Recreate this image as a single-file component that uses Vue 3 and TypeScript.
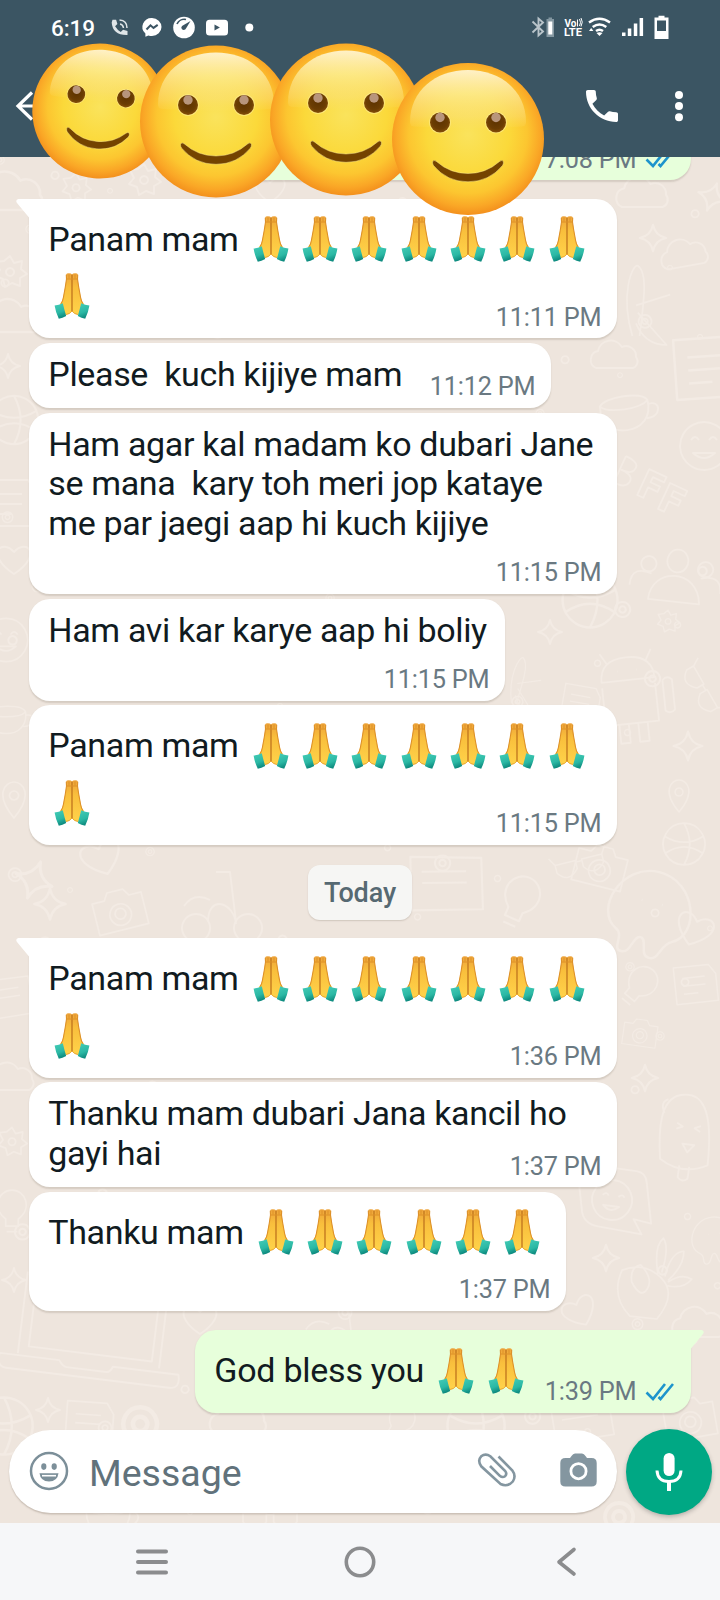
<script setup lang="ts">
interface Line {
  text: string
  hands?: number
}
interface Message {
  kind: 'msg'
  width: number
  lines: Line[]
  time: string
  sent?: boolean
  tail?: boolean
  timeBelow?: boolean
}
interface DateChip {
  kind: 'date'
  label: string
}
interface Face {
  id: number
  x: number
  y: number
  r: number
  tilt: number
}
interface Doodle {
  shape: string
  x: number
  y: number
  s: number
  rot: number
}

const items: (Message | DateChip)[] = [
  { kind: 'msg', width: 490, lines: [{ text: '' }], time: '7:08 PM', sent: true },
  { kind: 'msg', width: 588, lines: [{ text: 'Panam mam ', hands: 7 }, { text: '', hands: 1 }], time: '11:11 PM', tail: true },
  { kind: 'msg', width: 522, lines: [{ text: 'Please  kuch kijiye mam' }], time: '11:12 PM' },
  {
    kind: 'msg',
    width: 588,
    lines: [
      { text: 'Ham agar kal madam ko dubari Jane' },
      { text: 'se mana  kary toh meri jop kataye' },
      { text: 'me par jaegi aap hi kuch kijiye' },
    ],
    time: '11:15 PM',
    timeBelow: true,
  },
  { kind: 'msg', width: 476, lines: [{ text: 'Ham avi kar karye aap hi boliy' }], time: '11:15 PM', timeBelow: true },
  { kind: 'msg', width: 588, lines: [{ text: 'Panam mam ', hands: 7 }, { text: '', hands: 1 }], time: '11:15 PM' },
  { kind: 'date', label: 'Today' },
  { kind: 'msg', width: 588, lines: [{ text: 'Panam mam ', hands: 7 }, { text: '', hands: 1 }], time: '1:36 PM', tail: true },
  { kind: 'msg', width: 588, lines: [{ text: 'Thanku mam dubari Jana kancil ho' }, { text: 'gayi hai' }], time: '1:37 PM' },
  { kind: 'msg', width: 537, lines: [{ text: 'Thanku mam ', hands: 6 }], time: '1:37 PM', timeBelow: true },
  { kind: 'msg', width: 496, lines: [{ text: 'God bless you ', hands: 2 }], time: '1:39 PM', sent: true, tail: true },
]

const faces: Face[] = [
  { id: 1, x: 99.8, y: 111, r: 67.5, tilt: 5 },
  { id: 2, x: 216, y: 121.5, r: 76, tilt: 0 },
  { id: 3, x: 346, y: 119.5, r: 76, tilt: 0 },
  { id: 4, x: 468, y: 139, r: 76, tilt: 0 },
]

const shapes: Record<string, string> = {
  cloud: 'M-20 10a9 9 0 0 1 2-17a13 13 0 0 1 24-4a10 10 0 0 1 14 10a7 7 0 0 1-3 11z',
  star: 'M0-12Q2-2 12 0Q2 2 0 12Q-2 2-12 0Q-2-2 0-12z',
  flower: 'M0-14l4 7 8-2-1 8 6 5-7 4v8l-8-3-7 4-2-8-8-3 5-6-4-8 8-1zM0-2a4 4 0 1 0 .1 0z',
  cup: 'M-26-10c6-9 44-10 48 0c2 18-10 27-24 27s-26-8-24-27zM-26-10c8 8 40 8 48 0M22-6c14-3 12 15-3 14',
  smile: 'M0-24a24 24 0 1 0 .1 0zM-13-6q4-6 8 0M5-6q4-6 8 0M-11 7q11 10 22 0z',
  people: 'M0-30a11 12 0 1 0 .1 0zM-27 25c0-34 50-38 54 0zM-30-20a8 8 0 1 0 .1 0zM30-20a8 8 0 1 0 .1 0zM-48 12c0-16 10-18 22-14M48 12c0-16-10-18-22-14',
  droid: 'M-28 0q0-24 28-24t28 24zM-20-18l-7-12M20-18l7-12M-10-10h.5M10-10h.5M-28 6v40h56v-40M36 4v32q5 5 10 0v-32q-5-5-10 0M-14 46v20h10v-20M6 46v20h10v-20',
  camera: 'M-28-16h14l5-8h18l5 8h14v36h-56zM0-9a12 12 0 1 0 .1 0zM0-4a6 6 0 1 0 .1 0z',
  plane: 'M-4 40C-18-6-4-40 2-38C14-30 8 6 4 40M0 6l38-12M2 14l32 36q-24 0-34-24',
  note: 'M-24-20h44l8 12v34h-52zM-14-6h28M-14 4h28M-14 14h18',
  ball: 'M0-22a22 22 0 1 0 .1 0zM-20-8Q0 4 20-8M-20 10Q0-4 20 10M0-22Q12 0 0 22',
  scooter: 'M-26 14a14 14 0 1 0 .1 0zM26 14a14 14 0 1 0 .1 0zM-14 22c0-28 26-20 28 2M14 22l-6-50h-14M-38 6q10-14 26-6',
  heart: 'M0 14C-30-6-12-22 0-8C12-22 30-6 0 14z',
  bulb: 'M-7 18v-8c-16-12-8-32 7-32s23 20 7 32v8zM-6 24h12',
  shades: 'M-30-8h26v10q-14 16-26 0zM4-8h26v10q-14 16-26 0zM-4-6h8M-30-8l-6-10M30-8l6-10',
  pin: 'M0 20C-22-6-10-20 0-20S22-6 0 20zM0-10a5 5 0 1 0 .1 0z',
  book: 'M-34-22L30-30l8 46l-64 10zM-22-10l40-6M-20 0l40-6',
  dot: 'M0-4a4 4 0 1 0 .1 0z',
  ring: 'M0-7a7 7 0 1 0 .1 0zM0-3a3 3 0 1 0 .1 0z',
  octo: 'M-22 20c-20-10-8-50 22-50s42 40 22 50c-8 4-6 16-14 16s-4-14-10-14-4 14-12 14 0-12-8-16zM-8-6h.5M8-6h.5',
  letters: 'M-40-16v30M-40-16q18 0 14 10q-2 5-12 5q14 0 13 8q-2 9-15 7M-12-14h20v6H-5v6H6v6H-5v12h-7zM14-10h20v6H21v6H32v6H21v12h-7z',
  laptop: 'M-72-60V22M-62-60V14H62V-60M70-60V20M-90 24H-30q4 6 8 6H18q4 0 6-6H90q4 14-8 14H-82q-10 0-8-14zM-20-60q-4 22 16 24t22-24M-20-42l-2 14 14-4',
  creature: 'M-22 30c-6-30-8-60 12-66s34 8 36 66q-24 14-48 0zM-10-8l6 3-6 3M14-8l-6 3 6 3M-2 12h12l-6 8zM-2 34v12q5 5 10 0v-12M-22-30q-8 4-2 14',
  chat: 'M-40-32h60q10 0 12 10l10 40-18-2 10 14-44-2q-14 0-18-12zM0-20a20 20 0 1 0 .1 0zM-10-4q4-4 6 0M6-4q4-4 6 0M-8 6q8 8 16 0z',
  plant: 'M-20 0q-10 30 14 50h30q20-30 0-46t-44-4zM-8 12q-4-16 8-20q16 14 10 26t-18-6zM20 0q-8-30 2-40q8 10 2 38M28 2q4-28 18-30q2 16-14 34M32 8q14-12 26-6q-8 12-26 10',
}

function d(shape: string, x: number, y: number, s = 1, rot = 0): Doodle {
  return { shape, x, y, s, rot }
}

// Large motifs sit in the open margins of the conversation.
const motifs: Doodle[] = [
  d('cloud', 644, 196, 1.1), d('star', 712, 197, 1.2, 20), d('star', 653, 238, 1.1), d('cloud', 686, 256, 1, -10),
  d('plane', 636, 300, 0.9), d('cloud', 616, 358, 1), d('note', 706, 364, 1.3, -4), d('cup', 627, 413, 1, -8),
  d('smile', 704, 446, 1), d('letters', 654, 486, 0.95, 25), d('people', 676, 578, 0.95, 6), d('ball', 590, 600, 1.25),
  d('flower', 668, 620, 0.7), d('star', 550, 632, 1), d('droid', 628, 680, 0.95, -6), d('star', 688, 746, 1.2),
  d('pin', 679, 796, 0.8), d('ball', 684, 844, 0.95), d('camera', 600, 868, 0.9, 14), d('octo', 650, 910, 1.3, 14),
  d('shades', 580, 866, 0.8, -14), d('book', 444, 886, 1.1, 8), d('scooter', 222, 900, 1), d('camera', 120, 912, 0.9, -14),
  d('star', 34, 880, 1.6, 20), d('star', 50, 904, 1.3), d('heart', 102, 858, 1.2, -20), d('bulb', 520, 900, 1.1, 24),
  d('heart', 694, 930, 1.1, 20), d('note', 694, 982, 0.8, -6), d('camera', 640, 1034, 0.6, 8), d('bulb', 640, 985, 0.9, 40),
  d('star', 645, 1078, 1.1), d('creature', 686, 1132, 1, 8), d('chat', 612, 1200, 1, 8), d('star', 606, 1258, 1.1),
  d('octo', 714, 1238, 0.7, -6), d('plant', 640, 1272, 0.9, 6), d('heart', 580, 1312, 1, -26), d('cloud', 700, 1326, 1.1),
  d('laptop', 92, 1340, 1, 7), d('star', 48, 1410, 1), d('note', 88, 1420, 0.9, 4), d('ring', 140, 1424, 2.4),
  d('ball', 4, 1426, 1.3), d('heart', 200, 1320, 1), d('cloud', 240, 1422, 1.2), d('scooter', 340, 1324, 0.9),
  d('bulb', 400, 1422, 0.8, 30), d('ball', 476, 1426, 1.3), d('book', 580, 1420, 0.9), d('camera', 690, 1420, 0.9, -10),
  d('ring', 619, 1517, 2), d('cup', 110, 1518, 0.9), d('shades', 270, 1520, 0.9), d('flower', 76, 186, 0.9),
  d('flower', 144, 178, 1), d('cloud', 12, 196, 1.4), d('heart', 270, 190, 0.9), d('flower', 10, 270, 1),
  d('cloud', 14, 320, 1.2), d('star', 8, 366, 1), d('ball', 14, 420, 1.1), d('note', 8, 500, 1),
  d('heart', 14, 560, 1), d('smile', 6, 640, 0.9), d('cup', 8, 720, 0.8), d('pin', 14, 800, 0.9), d('book', 4, 1000, 0.8),
  d('cloud', 12, 1080, 1), d('flower', 12, 1140, 0.9), d('bulb', 12, 1210, 0.9), d('star', 14, 1280, 1),
  d('note', 580, 700, 0.7, 10), d('plane', 518, 680, 0.6, 10), d('shades', 700, 690, 0.8, 60),
]

const dots: Doodle[] = Array.from({ length: 150 }, (_, i) =>
  d(i % 3 === 0 ? 'ring' : 'dot', (i * 137.5) % 720, 160 + ((i * 211.3) % 1360), 0.6 + (i % 4) * 0.16),
)
const doodles = [...motifs, ...dots]
</script>

<template>
  <div class="screen">
    <svg class="defs" width="0" height="0" aria-hidden="true">
      <defs>
        <radialGradient id="skin" cx="50%" cy="47%" r="54%">
          <stop offset="0" stop-color="#fae35c" />
          <stop offset="0.5" stop-color="#fbd93a" />
          <stop offset="0.72" stop-color="#fcc630" />
          <stop offset="0.88" stop-color="#faa726" />
          <stop offset="1" stop-color="#f28c1b" />
        </radialGradient>
        <linearGradient id="gloss" x1="0" y1="0" x2="0" y2="1">
          <stop offset="0" stop-color="#fff4d0" stop-opacity="0.95" />
          <stop offset="0.4" stop-color="#fdf0a8" stop-opacity="0.68" />
          <stop offset="0.8" stop-color="#fbe38a" stop-opacity="0.4" />
          <stop offset="1" stop-color="#fbe070" stop-opacity="0.08" />
        </linearGradient>
        <radialGradient id="eye" cx="50%" cy="45%" r="55%">
          <stop offset="0" stop-color="#5e3300" />
          <stop offset="0.7" stop-color="#6b3d03" />
          <stop offset="1" stop-color="#874f08" />
        </radialGradient>
        <linearGradient id="hand" x1="0" y1="0" x2="0" y2="1">
          <stop offset="0" stop-color="#eda33a" />
          <stop offset="0.35" stop-color="#f9bf3c" />
          <stop offset="1" stop-color="#ffd34a" />
        </linearGradient>
        <linearGradient id="cuff" x1="0" y1="0" x2="0.3" y2="1">
          <stop offset="0" stop-color="#45cdb8" />
          <stop offset="0.65" stop-color="#2bb8a4" />
          <stop offset="1" stop-color="#0f8c80" />
        </linearGradient>
        <symbol id="pray" viewBox="0 0 46 46">
          <path d="M17.200 1.500Q17.400 .3 19.800 .3Q22.300 .3 23 1.600Q23.700 .3 26.200 .3Q28.600 .3 28.800 1.500L28.600 6L29.800 14L31.800 24.500Q32.500 28.500 35 31L30.500 41.500Q26 42 23 38Q20 42 15.500 41.500L11 31Q13.500 28.500 14.200 24.500L16.200 14L17.400 6Z" fill="url(#hand)" />
          <path d="M17.300 1.800L17.500 6L16.300 14L14.400 24.500Q13.700 28.500 12 30.800M28.700 1.800L28.500 6L29.700 14L31.600 24.500Q32.300 28.500 34 30.800" fill="none" stroke="#dd9029" stroke-width="1.100" />
          <path d="M17 41.500Q20.500 41.300 23 38Q25.500 41.300 29 41.500" fill="none" stroke="#e9a42f" stroke-width="1" />
          <path d="M23 1.800V27Q23 33 23 38" fill="none" stroke="#c47a20" stroke-width="1.400" />
          <path d="M18 6H28M20 1.500V5.500M26 1.500V5.500" fill="none" stroke="#dd9029" stroke-width="1" />
          <path d="M5.600 32.600Q9.800 32.200 13.800 30.300Q15.400 37 17.200 43Q13.500 45 9.800 45.700Q6.500 39 5.600 32.600Z" fill="url(#cuff)" />
          <path d="M40.400 32.600Q36.200 32.200 32.200 30.300Q30.600 37 28.800 43Q32.500 45 36.200 45.700Q39.500 39 40.400 32.600Z" fill="url(#cuff)" />
        </symbol>
        <symbol id="ticks" viewBox="0 0 30 20">
          <path d="M1.500 10.500L8 17L20 2M13.500 15L15.500 17L28 2" fill="none" stroke="#1d94cc" stroke-width="2.600" />
        </symbol>
      </defs>
    </svg>

    <header class="header">
      <div class="status">
        <span class="clock">6:19</span>
        <svg class="status-left" width="152" height="26" viewBox="108 14 152 26">
          <path d="M112.500 19.800h3.600l1.300 4.300-2.300 2.200q2.200 3.700 5.600 5.600l2.400-2.200 4.400 1.400v3.900q-15 .4-15.800-12.400z" fill="#dfe5e8" />
          <g fill="none" stroke="#dfe5e8" stroke-width="1.500">
            <path d="M119.500 20q7.500 .5 7.500 8" />
            <path d="M120 24q3 .5 3.500 4" />
          </g>
          <path d="M152 18a9.500 9 0 0 1 0 18q-2 0-3.600-.6l-3 1.400v-3.200A9.300 9 0 0 1 152 18z" fill="#fff" />
          <path d="M146.500 29.500l4-4.200 3 2.600 4.200-3" fill="none" stroke="#3b5463" stroke-width="2" />
          <circle cx="184" cy="27.500" r="10.800" fill="#fff" />
          <path d="M177 24a8 8 0 0 1 9-4.500" fill="none" stroke="#3b5463" stroke-width="1.700" />
          <path d="M190.500 21l-5 8.300q-2 1.600-3.500 0t0-3.300z" fill="#3b5463" />
          <rect x="206" y="19.800" width="22" height="15.600" rx="3.500" fill="#fff" />
          <path d="M214.500 24.400v6.200l5.400-3.100z" fill="#3b5463" />
          <circle cx="249.300" cy="27.500" r="4" fill="#fff" />
        </svg>
        <svg class="status-right" width="144" height="26" viewBox="528 14 144 26">
          <path d="M532.500 21.500l10.500 10-4.500 4v-17l4.500 4-10.500 10" fill="none" stroke="#b9c4ca" stroke-width="1.900" />
          <path d="M546.500 19h2v-1.500h3.500v1.500h2v18h-7.500z" fill="#8497a1" />
          <path d="M548.300 21.500h4v13h-4z" fill="#fff" />
          <text x="564.500" y="26.500" class="volte" textLength="12">Vo</text>
          <path d="M577.500 19.500v7M579.500 19q2 3.500 0 7M581 18q2.500 4 0 8.500" fill="none" stroke="#fff" stroke-width="1" />
          <text x="564" y="36" class="volte" textLength="18" lengthAdjust="spacingAndGlyphs">LTE</text>
          <g fill="none" stroke="#fff" stroke-width="2.500">
            <path d="M589 22.500q10.500-7.500 21 0" />
            <path d="M592.700 27q6.800-5 13.600 0" />
            <path d="M596 31q3.500-2.500 7 0" />
          </g>
          <path d="M599.500 36l-3-3q3-1.600 6 0z" fill="#fff" />
          <path d="M589 31l2.200-3 2.200 3z" fill="#fff" />
          <path d="M622 32.500h3.500v3.500h-3.500zM627.800 28.500h3.500v7.500h-3.500zM633.800 23.500h3.500v12.500h-3.500zM639.600 18h3.500v18h-3.500z" fill="#fff" />
          <path d="M658.500 15.700h6v1.800h4v21.500h-14v-21.500h4zM657 20.500v10.500h9v-10.500z" fill="#fff" fill-rule="evenodd" />
        </svg>
      </div>
      <div class="toolbar">
        <svg class="back" width="32" height="32" viewBox="0 0 32 32">
          <path d="M17 2.500L3 16L17 29.500M3 16H30" fill="none" stroke="#fff" stroke-width="3.200" />
        </svg>
        <svg class="call" width="32" height="32" viewBox="3 3 18 18">
          <path d="M6.620 10.790c1.440 2.830 3.760 5.140 6.590 6.590l2.200-2.200c.27-.27.67-.36 1.020-.24 1.120.37 2.330.57 3.570.57.55 0 1 .45 1 1V20c0 .55-.45 1-1 1-9.390 0-17-7.610-17-17 0-.55.45-1 1-1h3.500c.55 0 1 .45 1 1 0 1.250.2 2.450.57 3.570.11.35.03.74-.25 1.020l-2.200 2.200z" fill="#fff" />
        </svg>
        <svg class="more" width="8" height="32" viewBox="0 0 8 32">
          <circle cx="4" cy="5" r="4" fill="#fff" />
          <circle cx="4" cy="16" r="4" fill="#fff" />
          <circle cx="4" cy="27.200" r="4" fill="#fff" />
        </svg>
      </div>
    </header>

    <main class="chat">
      <svg class="wallpaper" width="720" height="1366" viewBox="0 157 720 1366">
        <path
          v-for="(k, i) in doodles"
          :key="i"
          :d="shapes[k.shape]"
          :transform="`translate(${k.x} ${k.y}) rotate(${k.rot}) scale(${k.s})`"
          class="doodle"
        />
      </svg>

      <div class="thread">
        <template v-for="(m, i) in items" :key="i">
          <div v-if="m.kind === 'date'" class="date">{{ m.label }}</div>
          <div
            v-else
            class="bubble"
            :class="{ sent: m.sent, tail: m.tail, below: m.timeBelow }"
            :style="{ width: m.width + 'px' }"
          >
            <svg v-if="m.tail" class="nib" width="16" height="22" viewBox="0 0 16 22">
              <path d="M16 0H2.500Q-1 .6 1 4L13 18.500V22H16Z" />
            </svg>
            <div class="body">
              <div v-for="(l, j) in m.lines" :key="j" class="line" :class="{ tall: l.hands }">
                <span>{{ l.text }}</span><svg v-for="n in l.hands ?? 0" :key="n" class="hands" width="46" height="46"><use href="#pray" /></svg>
              </div>
            </div>
            <div class="meta">
              <span class="time">{{ m.time }}</span>
              <svg v-if="m.sent" class="ticks" width="30" height="20"><use href="#ticks" /></svg>
            </div>
          </div>
        </template>
      </div>

      <footer class="composer">
        <div class="field">
          <svg class="emoji" width="40" height="40" viewBox="0 0 40 40">
            <circle cx="20" cy="20" r="18" fill="none" stroke="#7c8f99" stroke-width="2.500" />
            <ellipse cx="14.800" cy="15.600" rx="2.600" ry="3.300" fill="#7c8f99" />
            <ellipse cx="25.200" cy="15.600" rx="2.600" ry="3.300" fill="#7c8f99" />
            <path d="M10.500 22.300H29.500Q28.500 30.500 20 30.500T10.500 22.300Z" fill="#7c8f99" />
            <path d="M13 24.700H27" stroke="#fff" stroke-width="1.600" />
          </svg>
          <span class="placeholder">Message</span>
          <svg class="clip" width="40" height="38" viewBox="0 0 40 38">
            <path d="M21.500 4.500L35.200 18.300Q39.500 24 35.800 29.500Q30.500 35.500 23.500 32L4.200 14.300Q.2 8.500 4.200 4.300Q8.600 .8 13.300 4.300L28 18.800Q30.500 22 28 24.200Q25.500 26 22.800 23.800L13 14" fill="none" stroke="#8496a0" stroke-width="2.600" />
          </svg>
          <svg class="camera" width="37" height="34" viewBox="0 0 37 34">
            <path d="M11.500 3Q13 .5 15 .5H22Q24 .5 25.500 3L27 5H31.500Q36.700 5 36.700 10V28.500Q36.700 33.500 31.500 33.500H5.500Q.3 33.500 .3 28.500V10Q.3 5 5.500 5H10Z" fill="#8496a0" />
            <circle cx="18.500" cy="18.200" r="7.600" fill="#8496a0" stroke="#fff" stroke-width="2.800" />
          </svg>
        </div>
        <button class="mic" type="button" aria-label="Record">
          <svg width="28" height="38" viewBox="0 0 28 38">
            <rect x="8.600" y="0" width="11" height="23" rx="5.500" fill="#fff" />
            <path d="M2 17.500Q2.500 28.500 14 28.500T26 17.500" fill="none" stroke="#fff" stroke-width="3" />
            <path d="M14 28V38" stroke="#fff" stroke-width="4" />
          </svg>
        </button>
      </footer>
    </main>

    <nav class="nav">
      <svg width="32" height="32" viewBox="0 0 32 32">
        <path d="M2 5.500H30M2 16H30M2 26.500H30" stroke="#8b8c8e" stroke-width="4" stroke-linecap="round" />
      </svg>
      <svg width="32" height="32" viewBox="0 0 32 32">
        <circle cx="16" cy="16" r="13.700" fill="none" stroke="#8b8c8e" stroke-width="3.600" />
      </svg>
      <svg width="32" height="32" viewBox="0 0 32 32">
        <path d="M23 3.500L8 16L23 28" fill="none" stroke="#8b8c8e" stroke-width="3.600" stroke-linecap="round" stroke-linejoin="round" />
      </svg>
    </nav>

    <svg class="faces" width="720" height="230" viewBox="0 0 720 230">
      <g v-for="f in faces" :key="f.id" :transform="`translate(${f.x} ${f.y}) rotate(${f.tilt}) scale(${f.r / 76})`">
        <circle r="76" fill="url(#skin)" />
        <path d="M-58-17C-58-48-33-69 0-69S58-48 58-17Q58-13 54-12.500Q0-9-54-12.500Q-58-13-58-17Z" fill="url(#gloss)" />
        <g v-for="ex in [-28, 28]" :key="ex">
          <circle :cx="ex" cy="-16.500" r="10.800" fill="#fff1a0" fill-opacity="0.6" />
          <circle :cx="ex" cy="-16.500" r="10" fill="url(#eye)" />
          <circle :cx="ex" cy="-21.500" r="4.700" fill="#b8957c" />
        </g>
        <path d="M-35.500 23Q-34.500 20-31.500 22.500Q-18 34.500 0 34.500T31.500 22.500Q34.500 20 35.500 23Q35.500 25 34.500 26.500Q21 42.800 0 42.800T-34.500 26.500Q-35.500 25-35.500 23Z" fill="#744300" stroke="#fff09a" stroke-opacity=".5" stroke-width=".9" />
      </g>
    </svg>
  </div>
</template>

<style>
body {
  margin: 0;
}
</style>

<style scoped>
.screen {
  position: relative;
  display: flex;
  flex-direction: column;
  width: 720px;
  height: 1600px;
  overflow: hidden;
  font-family: Roboto, "Noto Sans", sans-serif;
  color: #111b21;
}
.defs {
  position: absolute;
}
.header {
  height: 157px;
  flex: none;
  background: #3b5563;
}
.status {
  display: flex;
  align-items: center;
  height: 54px;
  padding: 0 48px 0 51px;
}
.clock {
  width: 57px;
  padding-top: 1px;
  font-size: 22.500px;
  font-weight: 500;
  letter-spacing: -0.100px;
  color: #fff;
}
.status-right {
  margin-left: auto;
}
.volte {
  font-size: 10px;
  font-weight: 700;
  fill: #fff;
}
.toolbar {
  display: flex;
  align-items: center;
  height: 104px;
  padding: 0 37px 0 15px;
}
.call {
  margin-left: auto;
  margin-right: 57px;
}
.chat {
  position: relative;
  display: flex;
  flex-direction: column;
  justify-content: space-between;
  flex: 1;
  min-height: 0;
  overflow: hidden;
  background: #eee5dd;
}
.wallpaper {
  position: absolute;
  inset: 0;
}
.doodle {
  fill: none;
  stroke: #f3ebe4;
  stroke-width: 1.900;
  stroke-linejoin: round;
}
.thread {
  position: relative;
  display: flex;
  flex-direction: column;
  align-items: flex-start;
  gap: 4.500px;
  padding: 0 29px;
  margin-top: -42px;
}
.bubble {
  position: relative;
  display: grid;
  grid-template-columns: minmax(0, 1fr);
  box-sizing: border-box;
  flex: none;
  padding: 12px 15.500px 13.500px 19.300px;
  border-radius: 21px;
  background: #fff;
  box-shadow: 0 1.500px 1.500px rgba(90, 75, 60, 0.170);
}
.bubble.sent {
  align-self: flex-end;
  padding-right: 16.500px;
  background: #e7ffdb;
  margin-top: 15px;
}
.bubble.sent:first-child {
  margin-top: 0;
  margin-bottom: 14px;
}
.bubble.tail {
  border-top-left-radius: 0;
}
.bubble.tail.sent {
  border-top-left-radius: 21px;
  border-top-right-radius: 0;
}
.nib {
  position: absolute;
  left: -13px;
  top: 0;
  fill: #fff;
}
.sent .nib {
  left: auto;
  right: -12.500px;
  transform: scaleX(-1);
  fill: #e7ffdb;
}
.body,
.meta {
  grid-area: 1 / 1;
}
.below .body {
  padding-bottom: 36.700px;
}
.line {
  height: 39.800px;
  line-height: 39.800px;
  font-size: 34px;
  letter-spacing: -0.350px;
  white-space: pre;
}
.sent .line {
  letter-spacing: -0.250px;
}
.line.tall {
  height: 57px;
  line-height: 57px;
}
.hands {
  margin: 0 2.450px 0 0.900px;
  vertical-align: -11.700px;
}
.meta {
  display: flex;
  align-items: center;
  align-self: end;
  justify-self: end;
  height: 30px;
  margin-bottom: -7.800px;
  line-height: 30px;
  font-size: 25.300px;
  letter-spacing: -0.200px;
  color: #6a7982;
  white-space: pre;
}
.ticks {
  margin: -1px 0 0 8px;
}
.date {
  align-self: center;
  box-sizing: border-box;
  width: 104px;
  height: 55px;
  margin: 15.500px 0 14px;
  border-radius: 12px;
  background: #f6f6f4;
  box-shadow: 0 1px 1.500px rgba(90, 75, 60, 0.200);
  text-align: center;
  line-height: 57px;
  font-size: 27px;
  font-weight: 500;
  letter-spacing: -0.100px;
  color: #566972;
}
.composer {
  position: relative;
  display: flex;
  align-items: flex-start;
  justify-content: space-between;
  padding: 0 8px 8px 9px;
}
.field {
  display: flex;
  align-items: center;
  box-sizing: border-box;
  width: 608px;
  height: 83px;
  margin-top: 0.800px;
  padding: 0 20px 0 19.500px;
  border-radius: 42px;
  background: #fff;
  box-shadow: 0 1.500px 1.500px rgba(90, 75, 60, 0.250);
}
.placeholder {
  margin: 2.500px 0 0 20.500px;
  font-size: 37.500px;
  color: #61727b;
}
.clip {
  margin-left: auto;
  margin-right: 43px;
}
.camera {
  margin-top: -3px;
}
.mic {
  display: grid;
  place-items: center;
  width: 86px;
  height: 86px;
  padding: 0;
  border: 0;
  border-radius: 50%;
  background: #00a884;
  box-shadow: 0 2px 4px rgba(60, 60, 60, 0.300);
}
.nav {
  display: flex;
  align-items: center;
  justify-content: space-between;
  flex: none;
  box-sizing: border-box;
  height: 77px;
  padding: 0 137px 0 136px;
  background: #f6f7f9;
}
.faces {
  position: absolute;
  left: 0;
  top: 0;
}
</style>
